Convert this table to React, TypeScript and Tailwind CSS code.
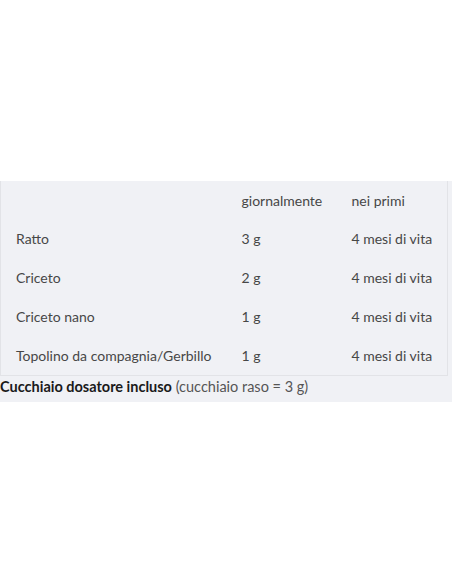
import React from 'react';

const rows = [
  { animal: 'Ratto', amount: '3 g', period: '4 mesi di vita' },
  { animal: 'Criceto', amount: '2 g', period: '4 mesi di vita' },
  { animal: 'Criceto nano', amount: '1 g', period: '4 mesi di vita' },
  { animal: 'Topolino da compagnia/Gerbillo', amount: '1 g', period: '4 mesi di vita' },
];

const App: React.FC = () => {
  return (
    <div className="min-h-[584px] w-[452px] bg-white font-['Lato',sans-serif] text-[14px] text-[#474747]">
      <div className="pt-[181px]">
        <div className="bg-[#f0f1f5] pb-[5px]">
          <table className="w-[447px] table-fixed border-collapse border-x border-b border-[#e2e3e7]">
            <colgroup>
              <col className="w-[226px]" />
              <col className="w-[110px]" />
              <col className="w-[111px]" />
            </colgroup>
            <tbody>
              <tr className="h-[38px]">
                <td className="pl-[15px]"></td>
                <td className="pl-[15px]">giornalmente</td>
                <td className="pl-[15px]">nei primi</td>
              </tr>
              {rows.map((r) => (
                <tr key={r.animal} className="h-[39px]">
                  <td className="pl-[15px] whitespace-nowrap">{r.animal}</td>
                  <td className="pl-[15px]">{r.amount}</td>
                  <td className="pl-[15px] whitespace-nowrap">{r.period}</td>
                </tr>
              ))}
            </tbody>
          </table>
          <p className="pt-[1px] text-[14.5px] leading-[20px] text-[#555]">
            <strong className="font-bold text-[#1a1a1a]">Cucchiaio dosatore incluso</strong> (cucchiaio raso = 3 g)
          </p>
        </div>
      </div>
    </div>
  );
};

export default App;
